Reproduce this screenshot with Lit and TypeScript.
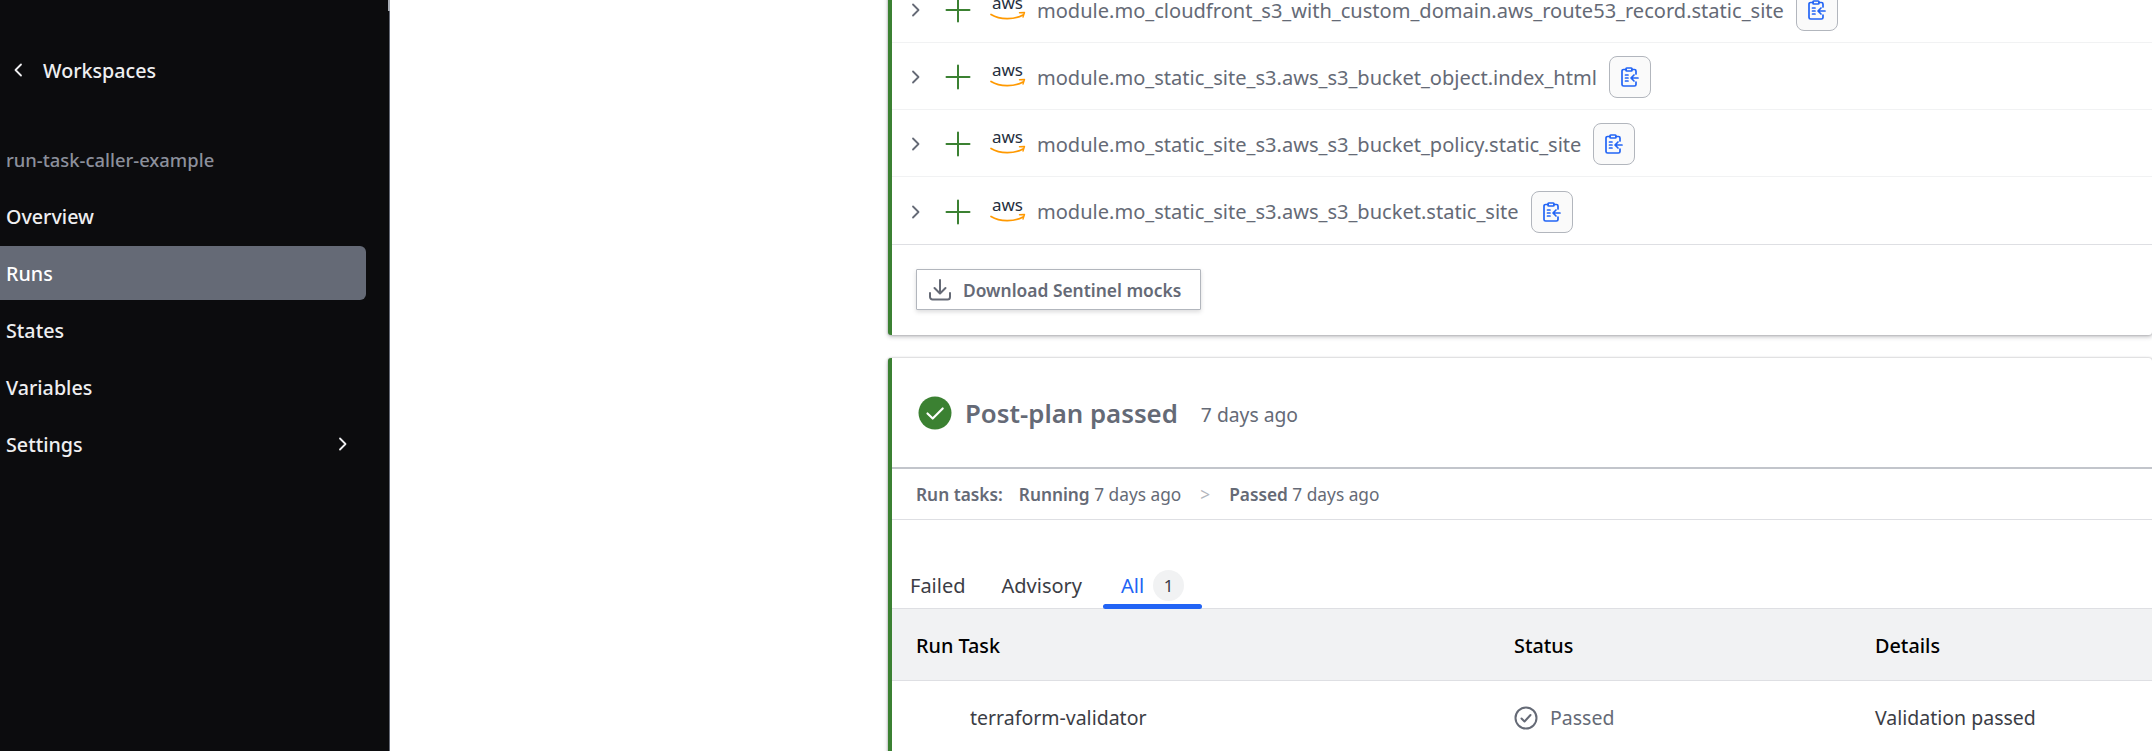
import { LitElement, html, css, svg } from 'lit';
import { customElement } from 'lit/decorators.js';

const chevron = (d: string) => svg`<path d=${d} fill="none" stroke="currentColor" stroke-width="1.8" stroke-linecap="round" stroke-linejoin="round"/>`;

const resources = [
    'module.mo_cloudfront_s3_with_custom_domain.aws_route53_record.static_site',
    'module.mo_static_site_s3.aws_s3_bucket_object.index_html',
    'module.mo_static_site_s3.aws_s3_bucket_policy.static_site',
    'module.mo_static_site_s3.aws_s3_bucket.static_site',
];

@customElement('app-root')
export class AppRoot extends LitElement {
    static styles = css`
    :host {
        display: flex;
        height: 751px;
        overflow: hidden;
        background: #fff;
        font-family: 'Noto Sans', 'Open Sans', sans-serif;
        color: #656a76;
    }

    svg {
        display: block;
        flex: none;
    }

    .sidebar {
        position: relative;
        width: 390px;
        flex: none;
        box-sizing: border-box;
        background: #0c0c0e;
        border-right: 1px solid #656a76;
        padding-top: 54px;
        color: #efeff1;
        font-size: 19.7px;
        font-weight: 500;
    }

    .sidebar::after {
        content: '';
        position: absolute;
        top: 0;
        right: -1px;
        width: 2px;
        height: 11px;
        background: #a9adb5;
    }

    .back {
        display: flex;
        align-items: center;
        height: 32px;
        padding-left: 10px;
        gap: 17px;
    }

    .workspace {
        margin-top: 58px;
        height: 32px;
        line-height: 32px;
        padding-left: 6px;
        color: #8c909c;
        font-size: 18.4px;
    }

    .nav {
        display: flex;
        flex-direction: column;
        gap: 3px;
        margin-top: 13px;
        padding-right: 23px;
    }

    .nav a {
        display: flex;
        align-items: center;
        justify-content: space-between;
        height: 54px;
        padding: 0 15px 0 6px;
        border-radius: 0 6px 6px 0;
    }

    .nav a.active {
        background: #656a76;
        color: #fff;
    }

    .main {
        flex: 1;
        min-width: 0;
        padding-left: 498px;
    }

    .card {
        box-sizing: border-box;
        border-left: 4px solid #3b8132;
        border-radius: 3px;
        background: #fff;
        box-shadow: 0 0 2px rgba(59, 61, 69, 0.45), 0 2px 4px rgba(59, 61, 69, 0.3);
    }

    .plan {
        margin-top: -24px;
        height: 359px;
    }

    .row {
        display: flex;
        align-items: center;
        box-sizing: border-box;
        height: 67px;
        border-bottom: 1px solid #f1f2f3;
        padding: 2px 0 0 16px;
        font-size: 20.06px;
    }

    .row:nth-child(4) {
        height: 68px;
        border-bottom: 1px solid #dedfe3;
    }

    .row .plus {
        margin-left: 21px;
        color: #3b8132;
    }

    .aws {
        margin-left: 19px;
    }

    .row .name {
        margin-left: 11px;
        white-space: nowrap;
    }

    .copy {
        display: flex;
        align-items: center;
        justify-content: center;
        box-sizing: border-box;
        width: 42px;
        height: 42px;
        margin-left: 12px;
        border: 1px solid #b2b6bd;
        border-radius: 8px;
        background: #fafafa;
        color: #2264f5;
    }

    .footer {
        padding: 24px 0 0 24px;
    }

    .download {
        display: inline-flex;
        align-items: center;
        box-sizing: border-box;
        width: 285px;
        height: 41px;
        padding-left: 11px;
        gap: 11px;
        border: 1px solid #b2b6bd;
        border-radius: 1px;
        background: #fff;
        box-shadow: 0 2px 4px rgba(59, 61, 69, 0.18);
        font-size: 17.4px;
        font-weight: 600;
    }

    .post {
        margin-top: 23px;
        height: 420px;
    }

    .post-head {
        display: flex;
        align-items: center;
        box-sizing: border-box;
        height: 111px;
        border-bottom: 2px solid #c2c5cb;
        padding-left: 26px;
    }

    .post-head h2 {
        margin: 2px 0 0 13px;
        font-size: 25.8px;
        font-weight: 600;
        line-height: 1;
    }

    .post-head span {
        margin: 4px 0 0 23px;
        font-size: 19.3px;
    }

    .timeline {
        display: flex;
        align-items: center;
        box-sizing: border-box;
        height: 51px;
        border-bottom: 1px solid #dedfe3;
        padding-left: 24px;
        font-size: 17.3px;
    }

    .timeline b {
        font-weight: 600;
    }

    .timeline .label {
        margin-right: 16px;
    }

    .timeline .sep {
        margin: 0 19px;
        color: #b2b6bd;
    }

    .tabs {
        display: flex;
        align-items: center;
        box-sizing: border-box;
        height: 89px;
        padding: 42px 0 0 18px;
        border-bottom: 1px solid #dedfe3;
        font-size: 20px;
        color: #3b3d45;
    }

    .tab {
        position: relative;
        display: flex;
        align-items: center;
        height: 46px;
    }

    .tab + .tab {
        margin-left: 36px;
    }

    .tab.active {
        color: #2264f5;
        margin-left: 21px;
        padding: 0 18px;
    }

    .tab.active::after {
        content: '';
        position: absolute;
        left: 0;
        right: 0;
        bottom: -1px;
        height: 5px;
        border-radius: 3px;
        background: #2264f5;
    }

    .count {
        display: flex;
        align-items: center;
        justify-content: center;
        width: 31px;
        height: 31px;
        margin-left: 9px;
        border-radius: 50%;
        background: #f1f2f3;
        color: #3b3d45;
        font-size: 17px;
    }

    .grid {
        display: grid;
        grid-template-columns: 598px 361px 1fr;
    }

    .grid > div {
        display: flex;
        align-items: center;
        box-sizing: border-box;
    }

    .th {
        height: 72px;
        background: #f1f2f3;
        border-bottom: 1px solid #dedfe3;
        color: #000;
        font-size: 19.8px;
        font-weight: 500;
        padding: 2px 0 0 24px;
    }

    .td {
        height: 70px;
        font-size: 19.5px;
        color: #3b3d45;
        padding: 3px 0 0 24px;
    }

    .td.first {
        padding-left: 78px;
    }

    .td.status {
        color: #656a76;
        gap: 12px;
    }
    `;

    renderRow(name: string) {
        return html`
        <div class="row">
            <svg width="16" height="16" viewBox="0 0 16 16">${chevron('M5 2.5 10.5 8 5 13.5')}</svg>
            <svg class="plus" width="26" height="26" viewBox="0 0 26 26">
                <path d="M13 1.5v23M1.5 13h23" fill="none" stroke="currentColor" stroke-width="2" stroke-linecap="round"/>
            </svg>
            ${this.renderAws()}
            <span class="name">${name}</span>
            <div class="copy">
                <svg width="18" height="20" viewBox="0 0 18 20" fill="none" stroke="currentColor" stroke-width="1.7" stroke-linecap="round" stroke-linejoin="round">
                    <path d="M5 2.5H2.6A1.6 1.6 0 0 0 1 4.1v13.3A1.6 1.6 0 0 0 2.6 19h10.8a1.6 1.6 0 0 0 1.6-1.6V15"/>
                    <path d="M11 2.5h2.4A1.6 1.6 0 0 1 15 4.1V7"/>
                    <rect x="5" y="1" width="6" height="3" rx=".8"/>
                    <path d="M4.5 8h2.5M4.5 11h2.5M4.5 14h2.5M17 11h-6.5M13 8l-3 3 3 3"/>
                </svg>
            </div>
        </div>`;
    }

    renderAws() {
        return html`
        <svg class="aws" width="36" height="28" viewBox="0 0 36 28">
            <text x="17.5" y="13" text-anchor="middle" font-family="'Noto Sans', sans-serif" font-size="17" fill="#252f3e">aws</text>
            <path d="M1 18.5c9 5.5 23 5.5 32 .5" fill="none" stroke="#f90" stroke-width="1.7" stroke-linecap="round"/>
            <path d="M29.5 16.8 34.5 16.5 33 21" fill="none" stroke="#f90" stroke-width="1.4" stroke-linecap="round" stroke-linejoin="round"/>
        </svg>`;
    }

    render() {
        return html`
        <aside class="sidebar">
            <div class="back">
                <svg width="16" height="16" viewBox="0 0 16 16">${chevron('M11 2.5 5.5 8l5.5 5.5')}</svg>
                <span>Workspaces</span>
            </div>
            <div class="workspace">run-task-caller-example</div>
            <nav class="nav">
                <a>Overview</a>
                <a class="active">Runs</a>
                <a>States</a>
                <a>Variables</a>
                <a>Settings
                    <svg width="16" height="16" viewBox="0 0 16 16">${chevron('M5 2.5 10.5 8 5 13.5')}</svg>
                </a>
            </nav>
        </aside>
        <main class="main">
            <section class="card plan">
                ${resources.map((r) => this.renderRow(r))}
                <div class="footer">
                    <div class="download">
                        <svg width="24" height="24" viewBox="0 0 24 24" fill="none" stroke="currentColor" stroke-width="2" stroke-linecap="round" stroke-linejoin="round">
                            <path d="M12 2v13M6.5 10l5.5 5.5 5.5-5.5M2 15v4a2.5 2.5 0 0 0 2.5 2.5h15A2.5 2.5 0 0 0 22 19v-4"/>
                        </svg>
                        <span>Download Sentinel mocks</span>
                    </div>
                </div>
            </section>
            <section class="card post">
                <div class="post-head">
                    <svg width="34" height="34" viewBox="0 0 34 34">
                        <circle cx="17" cy="17" r="16.5" fill="#3b8132"/>
                        <path d="M9.5 17.5l5.2 5 10-10" fill="none" stroke="#fff" stroke-width="2.2" stroke-linecap="round" stroke-linejoin="round"/>
                    </svg>
                    <h2>Post-plan passed</h2>
                    <span>7 days ago</span>
                </div>
                <div class="timeline">
                    <b class="label">Run tasks:</b>
                    <span><b>Running</b> 7 days ago</span>
                    <span class="sep">&gt;</span>
                    <span><b>Passed</b> 7 days ago</span>
                </div>
                <div class="tabs">
                    <div class="tab">Failed</div>
                    <div class="tab">Advisory</div>
                    <div class="tab active">All<span class="count">1</span></div>
                </div>
                <div class="grid">
                    <div class="th">Run Task</div>
                    <div class="th">Status</div>
                    <div class="th">Details</div>
                    <div class="td first">terraform-validator</div>
                    <div class="td status">
                        <svg width="24" height="24" viewBox="0 0 24 24" fill="none" stroke="currentColor" stroke-width="2" stroke-linecap="round" stroke-linejoin="round">
                            <circle cx="12" cy="12" r="10.5"/>
                            <path d="M7.5 12.5l3 3 6-6.5"/>
                        </svg>
                        Passed
                    </div>
                    <div class="td">Validation passed</div>
                </div>
            </section>
        </main>
        `;
    }
}

declare global {
    interface HTMLElementTagNameMap {
        'app-root': AppRoot;
    }
}
